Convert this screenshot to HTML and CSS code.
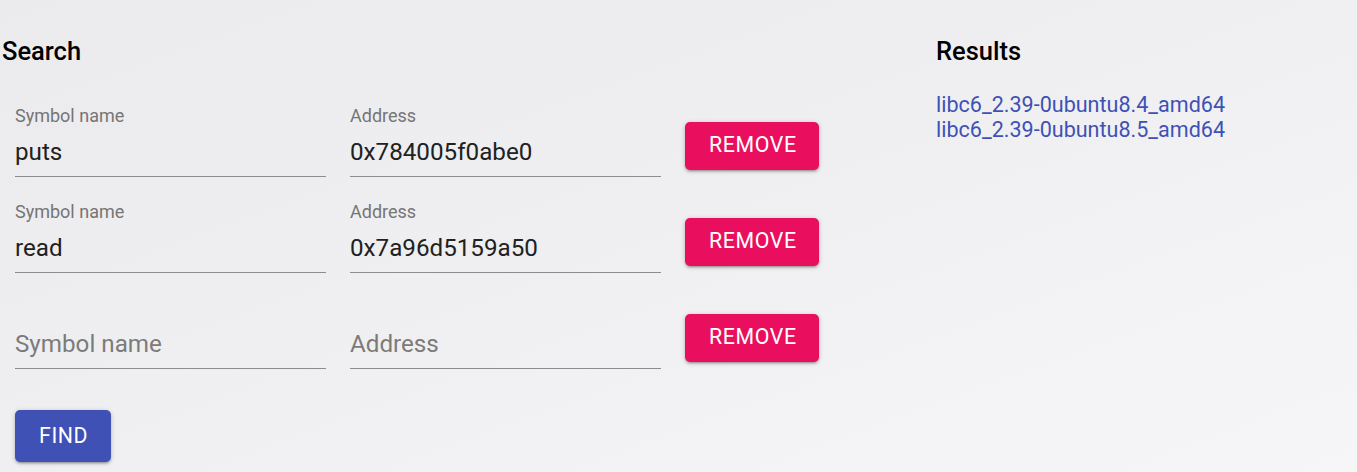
FILE: index.html
```html
<!DOCTYPE html>
<html>
<head>
<meta charset="utf-8">
<link rel="stylesheet" href="styles.css">
</head>
<body>
<div class="page">
  <section class="search">
    <h2 class="title">Search</h2>
    <div class="rows">
      <div class="row">
        <label class="field">
          <span class="label">Symbol name</span>
          <span class="input">puts</span>
        </label>
        <label class="field">
          <span class="label">Address</span>
          <span class="input">0x784005f0abe0</span>
        </label>
        <button class="btn remove">REMOVE</button>
      </div>
      <div class="row">
        <label class="field">
          <span class="label">Symbol name</span>
          <span class="input">read</span>
        </label>
        <label class="field">
          <span class="label">Address</span>
          <span class="input">0x7a96d5159a50</span>
        </label>
        <button class="btn remove">REMOVE</button>
      </div>
      <div class="row">
        <label class="field">
          <span class="label"></span>
          <span class="input placeholder">Symbol name</span>
        </label>
        <label class="field">
          <span class="label"></span>
          <span class="input placeholder">Address</span>
        </label>
        <button class="btn remove">REMOVE</button>
      </div>
    </div>
    <button class="btn find">FIND</button>
  </section>
  <section class="results">
    <h2 class="title">Results</h2>
    <ul class="links">
      <li><a href="#">libc6_2.39-0ubuntu8.4_amd64</a></li>
      <li><a href="#">libc6_2.39-0ubuntu8.5_amd64</a></li>
    </ul>
  </section>
</div>
</body>
</html>
```
FILE: styles.css
```css
html, body {
  margin: 0;
  height: 100%;
}
body {
  font-family: Roboto, "Liberation Sans", sans-serif;
  background: linear-gradient(160deg, #ebebed 0%, #efeff1 45%, #f6f6f8 100%);
  overflow: hidden;
}
.page {
  display: flex;
  padding-top: 37px;
}
.search {
  width: 934px;
  padding-left: 2px;
  display: flex;
  flex-direction: column;
  align-items: flex-start;
}
.title {
  margin: 0;
  font-size: 25.5px;
  font-weight: 500;
  line-height: 29px;
  color: #000;
}
.rows {
  margin-top: 39px;
  padding-left: 13px;
  display: flex;
  flex-direction: column;
  gap: 24px;
}
.row {
  display: flex;
  align-items: flex-end;
  gap: 24px;
}
.field {
  width: 311px;
  display: flex;
  flex-direction: column;
  border-bottom: 1px solid #8c8c8d;
}
.label {
  font-size: 18px;
  line-height: 21px;
  height: 21px;
  color: #757575;
}
.input {
  margin-top: 12px;
  padding-bottom: 10px;
  font-size: 24.2px;
  line-height: 28px;
  color: #212121;
}
.input.placeholder {
  color: #7b7b7b;
}
.btn {
  border: 0;
  border-radius: 5px;
  font-family: Roboto, "Liberation Sans", sans-serif;
  font-size: 21.33px;
  font-weight: 400;
  letter-spacing: 0.6px;
  color: #fff;
  padding: 0 24px;
  box-shadow: 0 1px 5px rgba(0,0,0,0.2), 0 2px 2px rgba(0,0,0,0.14), 0 3px 1px -2px rgba(0,0,0,0.12);
}
.remove {
  height: 48px;
  width: 134px;
  margin-bottom: 7px;
  padding-bottom: 4px;
  background: #ea0f5e;
}
.find {
  margin-top: 41px;
  margin-left: 13px;
  height: 52px;
  width: 96px;
  padding-bottom: 2px;
  background: #3f51b5;
}
.results {
  display: flex;
  flex-direction: column;
}
.links {
  list-style: none;
  margin: 26px 0 0 0;
  padding: 0;
}
.links li {
  font-size: 21.55px;
  line-height: 25px;
}
.links a {
  color: #3f51b5;
  text-decoration: none;
}
```
